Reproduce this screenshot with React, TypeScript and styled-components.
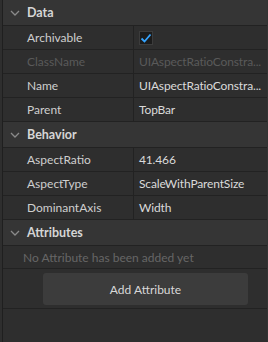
import { createGlobalStyle, styled } from "styled-components";

const Global = createGlobalStyle`
  html, body {
    margin: 0;
    padding: 0;
    background: #2e2e2e;
  }
  body {
    width: 268px;
    height: 342px;
    overflow: hidden;
    font-family: "Lato", "Liberation Sans", sans-serif;
  }
`;

type Prop = { name: string; value?: string; disabled?: boolean; check?: boolean };

const sections: { title: string; props: Prop[] }[] = [
  {
    title: "Data",
    props: [
      { name: "Archivable", check: true },
      { name: "ClassName", value: "UIAspectRatioConstra...", disabled: true },
      { name: "Name", value: "UIAspectRatioConstra..." },
      { name: "Parent", value: "TopBar" },
    ],
  },
  {
    title: "Behavior",
    props: [
      { name: "AspectRatio", value: "41.466" },
      { name: "AspectType", value: "ScaleWithParentSize" },
      { name: "DominantAxis", value: "Width" },
    ],
  },
];

function Chevron() {
  return (
    <svg width="10" height="6" viewBox="0 0 10 6">
      <path d="M1 1 L5 5 L9 1" stroke="#8a8a8a" strokeWidth="1.3" fill="none" />
    </svg>
  );
}

function CheckBox() {
  return (
    <S.Check>
      <svg width="12" height="10" viewBox="0 0 12 10">
        <path d="M1.5 5.5 L4.5 8.5 L10.5 1.5" stroke="#35a4ff" strokeWidth="1.8" fill="none" />
      </svg>
    </S.Check>
  );
}

function App() {
  return (
    <>
      <Global />
      <S.Panel>
        {sections.map((sec) => (
          <div key={sec.title}>
            <S.Header>
              <S.Arrow><Chevron /></S.Arrow>
              {sec.title}
            </S.Header>
            {sec.props.map((p) => (
              <S.Row key={p.name}>
                <S.Name disabled={p.disabled}>{p.name}</S.Name>
                <S.Value disabled={p.disabled}>
                  {p.check ? <CheckBox /> : p.value}
                </S.Value>
              </S.Row>
            ))}
          </div>
        ))}
        <S.Header>
          <S.Arrow><Chevron /></S.Arrow>
          Attributes
        </S.Header>
        <S.Empty>No Attribute has been added yet</S.Empty>
        <S.ButtonRow>
          <S.Button>Add Attribute</S.Button>
        </S.ButtonRow>
      </S.Panel>
    </>
  );
}

const S = {
  Panel: styled.div`
    margin-left: 2px;
    width: 264px;
    height: 342px;
    border-left: 1px solid #1f1f1f;
    border-right: 1px solid #333333;
    background: #2e2e2e;
  `,
  Header: styled.div`
    display: flex;
    align-items: center;
    height: 25px;
    border-bottom: 1px solid #222222;
    background: #353535;
    color: #d6d6d6;
    font-size: 12.5px;
    font-weight: 700;
  `,
  Arrow: styled.span`
    display: flex;
    width: 24px;
    padding-left: 7px;
    box-sizing: border-box;
  `,
  Row: styled.div`
    display: flex;
    height: 23px;
    border-bottom: 1px solid #222222;
    font-size: 12px;
  `,
  Name: styled.div<{ disabled?: boolean }>`
    display: flex;
    align-items: center;
    width: 131px;
    padding-left: 24px;
    box-sizing: border-box;
    border-right: 1px solid #222222;
    color: ${(p) => (p.disabled ? "#5a5a5a" : "#cfcfcf")};
  `,
  Value: styled.div<{ disabled?: boolean }>`
    display: flex;
    align-items: center;
    flex: 1;
    min-width: 0;
    padding-left: 5px;
    letter-spacing: -0.15px;
    color: ${(p) => (p.disabled ? "#5a5a5a" : "#dadada")};
    white-space: nowrap;
    overflow: hidden;
  `,
  Check: styled.div`
    display: flex;
    align-items: center;
    justify-content: center;
    width: 14px;
    height: 14px;
    background: #1c1c1c;
    border: 1px solid #3c3c3c;
    box-sizing: border-box;
  `,
  Empty: styled.div`
    display: flex;
    align-items: center;
    height: 22px;
    padding-left: 20px;
    border-bottom: 1px solid #222222;
    color: #666666;
    font-size: 12px;
  `,
  ButtonRow: styled.div`
    padding: 4px 19px 3px 40px;
    border-bottom: 1px solid #222222;
  `,
  Button: styled.div`
    display: flex;
    align-items: center;
    justify-content: center;
    height: 32px;
    border-radius: 3px;
    background: #3c3c3c;
    color: #d8d8d8;
    font-size: 12px;
  `,
};

export default App;
